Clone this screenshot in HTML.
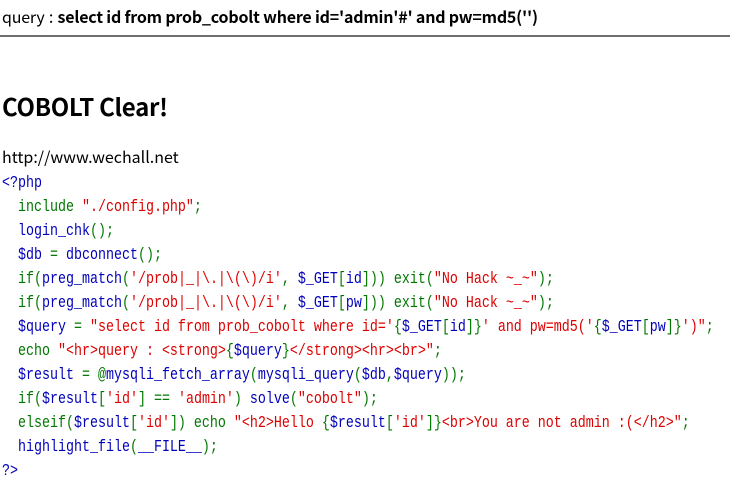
<!DOCTYPE html>
<html><head><meta charset="utf-8">
<style>
html,body{margin:0;padding:0;background:#fff;width:730px;height:480px;overflow:hidden}
body{font-family:"Liberation Sans","Noto Sans CJK JP",sans-serif;color:#000}
.q{position:absolute;left:2px;top:4px;font-size:16px;font-family:"Noto Sans CJK JP","Liberation Sans",sans-serif;white-space:nowrap;letter-spacing:-0.2px}
.q b{font-weight:bold}
.hr{position:absolute;left:0;top:35px;width:730px;height:2px;background:#6e6e6e}
h2{position:absolute;left:2px;top:88px;margin:0;font-size:24px;font-weight:bold;font-family:"Noto Sans CJK JP","Liberation Sans",sans-serif;letter-spacing:-0.3px}
.u{position:absolute;left:2px;top:144px;line-height:24px;font-family:"Noto Sans CJK JP","Liberation Sans",sans-serif;font-size:16px;color:#000;white-space:nowrap}
.c{position:absolute;left:2px;top:148px;line-height:24px;white-space:pre;font-family:"Liberation Mono",monospace;font-size:16.67px;transform:scaleX(0.8);transform-origin:0 0}
.g{color:#007700}.b{color:#0000BB}.r{color:#DD0000}
</style></head><body>
<div class="q">query<span style="padding:0 1px"> : </span><b>select id from prob_cobolt where id='admin'#' and pw=md5('')</b></div>
<div class="hr"></div>
<h2>COBOLT Clear!</h2>
<div class="u">http://www.wechall.net</div>
<div class="c"> 
<span class="b">&lt;?php</span>
<span class="b">  </span><span class="g">include </span><span class="r">"./config.php"</span><span class="g">;</span>
<span class="b">  login_chk</span><span class="g">();</span>
<span class="b">  $db </span><span class="g">= </span><span class="b">dbconnect</span><span class="g">();</span>
<span class="b">  </span><span class="g">if(</span><span class="b">preg_match</span><span class="g">(</span><span class="r">'/prob|_|\.|\(\)/i'</span><span class="g">, </span><span class="b">$_GET</span><span class="g">[</span><span class="b">id</span><span class="g">])) exit(</span><span class="r">"No Hack ~_~"</span><span class="g">);</span>
<span class="b">  </span><span class="g">if(</span><span class="b">preg_match</span><span class="g">(</span><span class="r">'/prob|_|\.|\(\)/i'</span><span class="g">, </span><span class="b">$_GET</span><span class="g">[</span><span class="b">pw</span><span class="g">])) exit(</span><span class="r">"No Hack ~_~"</span><span class="g">);</span>
<span class="b">  $query </span><span class="g">= </span><span class="r">"select id from prob_cobolt where id='</span><span class="g">{</span><span class="b">$_GET</span><span class="g">[</span><span class="b">id</span><span class="g">]}</span><span class="r">' and pw=md5('</span><span class="g">{</span><span class="b">$_GET</span><span class="g">[</span><span class="b">pw</span><span class="g">]}</span><span class="r">')"</span><span class="g">;</span>
<span class="b">  </span><span class="g">echo </span><span class="r">"&lt;hr&gt;query : &lt;strong&gt;</span><span class="g">{</span><span class="b">$query</span><span class="g">}</span><span class="r">&lt;/strong&gt;&lt;hr&gt;&lt;br&gt;"</span><span class="g">;</span>
<span class="b">  $result </span><span class="g">= @</span><span class="b">mysqli_fetch_array</span><span class="g">(</span><span class="b">mysqli_query</span><span class="g">(</span><span class="b">$db</span><span class="g">,</span><span class="b">$query</span><span class="g">));</span>
<span class="b">  </span><span class="g">if(</span><span class="b">$result</span><span class="g">[</span><span class="r">'id'</span><span class="g">] == </span><span class="r">'admin'</span><span class="g">) </span><span class="b">solve</span><span class="g">(</span><span class="r">"cobolt"</span><span class="g">);</span>
<span class="b">  </span><span class="g">elseif(</span><span class="b">$result</span><span class="g">[</span><span class="r">'id'</span><span class="g">]) echo </span><span class="r">"&lt;h2&gt;Hello </span><span class="g">{</span><span class="b">$result</span><span class="g">[</span><span class="r">'id'</span><span class="g">]}</span><span class="r">&lt;br&gt;You are not admin :(&lt;/h2&gt;"</span><span class="g">;</span>
<span class="b">  highlight_file</span><span class="g">(</span><span class="b">__FILE__</span><span class="g">);</span>
<span class="b">?&gt;</span></div>
</body></html>
